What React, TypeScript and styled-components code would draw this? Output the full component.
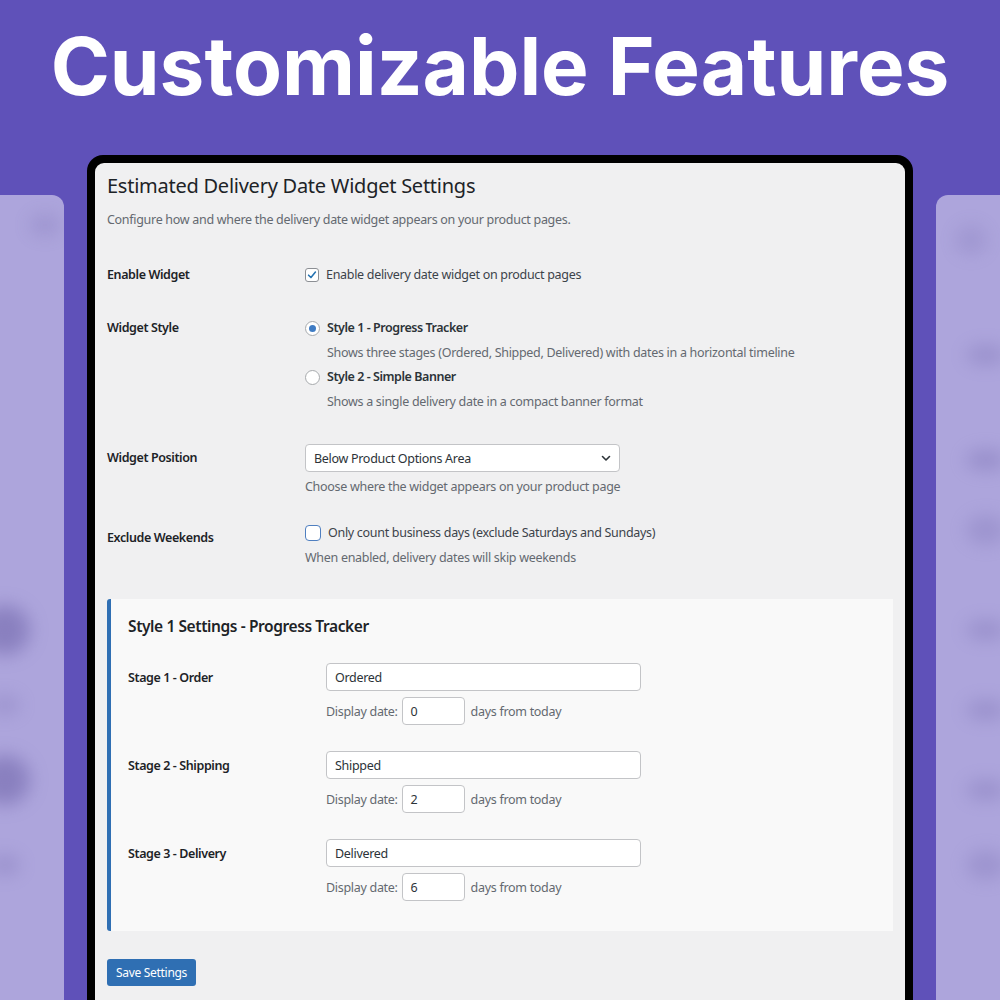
import React from 'react';
import styled, { createGlobalStyle } from 'styled-components';

const GlobalStyle = createGlobalStyle`
  html, body {
    margin: 0;
    padding: 0;
  }
  body {
    font-family: "Noto Sans", "Open Sans", sans-serif;
  }
`;

interface IBlob {
	top: number;
	left: number;
	w: number;
	h: number;
	o: number;
}

const leftBlobs: IBlob[] = [
	{top: 20, left: 30, w: 30, h: 20, o: 0.25},
	{top: 410, left: -20, w: 50, h: 50, o: 0.55},
	{top: 500, left: -10, w: 30, h: 20, o: 0.25},
	{top: 560, left: -20, w: 50, h: 50, o: 0.55},
	{top: 660, left: -10, w: 30, h: 20, o: 0.3},
];

const rightBlobs: IBlob[] = [
	{top: 30, left: 20, w: 30, h: 30, o: 0.2},
	{top: 150, left: 30, w: 40, h: 20, o: 0.3},
	{top: 255, left: 30, w: 40, h: 20, o: 0.35},
	{top: 320, left: 30, w: 40, h: 30, o: 0.25},
	{top: 425, left: 30, w: 40, h: 20, o: 0.3},
	{top: 505, left: 30, w: 40, h: 20, o: 0.3},
	{top: 585, left: 30, w: 40, h: 20, o: 0.3},
	{top: 655, left: 30, w: 40, h: 30, o: 0.25},
];

const stages = [
	{label: 'Stage 1 - Order', name: 'Ordered', days: '0'},
	{label: 'Stage 2 - Shipping', name: 'Shipped', days: '2'},
	{label: 'Stage 3 - Delivery', name: 'Delivered', days: '6'},
];

const CheckIcon = (): JSX.Element => (
	<svg width="14" height="14" viewBox="0 0 14 14">
		<path d="M3 7.2 L5.8 10 L11 3.6" fill="none" stroke="#2271b1" strokeWidth="1.8" strokeLinecap="round" strokeLinejoin="round"/>
	</svg>
);

const Chevron = (): JSX.Element => (
	<svg width="12" height="12" viewBox="0 0 12 12">
		<path d="M2.5 4.5 L6 8 L9.5 4.5" fill="none" stroke="#2c3338" strokeWidth="1.6" strokeLinecap="round" strokeLinejoin="round"/>
	</svg>
);

const App: React.FC = (): JSX.Element => {
	return (
		<Page>
			<GlobalStyle/>
			<Headline>Customizable Features</Headline>

			<Stage>
				<SidePanel>
					{leftBlobs.map((b, i) => (
						<Blob key={i} style={{top: b.top, left: b.left, width: b.w, height: b.h, opacity: b.o}}/>
					))}
				</SidePanel>

				<Frame>
					<Screen>
						<PageTitle>Estimated Delivery Date Widget Settings</PageTitle>
						<Intro>Configure how and where the delivery date widget appears on your product pages.</Intro>

						<Row gap={35}>
							<Label>Enable Widget</Label>
							<Field>
								<OptionLine>
									<Checkbox checked><CheckIcon/></Checkbox>
									<OptionText>Enable delivery date widget on product pages</OptionText>
								</OptionLine>
							</Field>
						</Row>

						<Row gap={33}>
							<Label>Widget Style</Label>
							<Field>
								<OptionLine>
									<Radio checked/>
									<OptionText strong>Style 1 - Progress Tracker</OptionText>
								</OptionLine>
								<OptionHint>Shows three stages (Ordered, Shipped, Delivered) with dates in a horizontal timeline</OptionHint>
								<OptionLine spaced>
									<Radio/>
									<OptionText strong>Style 2 - Simple Banner</OptionText>
								</OptionLine>
								<OptionHint>Shows a single delivery date in a compact banner format</OptionHint>
							</Field>
						</Row>

						<Row gap={32}>
							<Label offset={4}>Widget Position</Label>
							<Field>
								<Select>
									<span>Below Product Options Area</span>
									<Chevron/>
								</Select>
								<Description>Choose where the widget appears on your product page</Description>
							</Field>
						</Row>

						<Row gap={26}>
							<Label offset={5}>Exclude Weekends</Label>
							<Field>
								<OptionLine>
									<Checkbox focused/>
									<OptionText>Only count business days (exclude Saturdays and Sundays)</OptionText>
								</OptionLine>
								<Description>When enabled, delivery dates will skip weekends</Description>
							</Field>
						</Row>

						<SettingsBox>
							<BoxTitle>Style 1 Settings - Progress Tracker</BoxTitle>
							{stages.map((s, i) => (
								<Row key={s.label} gap={i === 0 ? 25 : 26}>
									<Label offset={5}>{s.label}</Label>
									<Field>
										<TextInput>{s.name}</TextInput>
										<DateLine>
											<span>Display date:</span>
											<NumberInput>{s.days}</NumberInput>
											<span>days from today</span>
										</DateLine>
									</Field>
								</Row>
							))}
						</SettingsBox>

						<SaveButton>Save Settings</SaveButton>
					</Screen>
				</Frame>

				<SidePanel>
					{rightBlobs.map((b, i) => (
						<Blob key={i} style={{top: b.top, left: b.left, width: b.w, height: b.h, opacity: b.o}}/>
					))}
				</SidePanel>
			</Stage>
		</Page>
	);
};

export default App;

const Page = styled.div`
  width: 1000px;
  height: 1000px;
  overflow: hidden;
  background-color: #5f51b9;
  display: flex;
  flex-direction: column;
`;

const Headline = styled.h1`
  flex-shrink: 0;
  margin: 0;
  height: 155px;
  padding-top: 18px;
  box-sizing: border-box;
  font-family: Inter, "Liberation Sans", sans-serif;
  font-weight: 700;
  font-size: 80px;
  line-height: 96px;
  color: #ffffff;
  text-align: center;
  letter-spacing: 0;
`;

const Stage = styled.div`
  flex-shrink: 0;
  display: flex;
  justify-content: space-between;
  align-items: flex-start;
`;

const SidePanel = styled.div`
  position: relative;
  overflow: hidden;
  width: 64px;
  height: 900px;
  margin-top: 40px;
  border-radius: 12px;
  background-color: #ada5dc;
  &:first-child {
    border-radius: 0 12px 12px 0;
  }
  &:last-child {
    border-radius: 12px 0 0 12px;
  }
`;

const Blob = styled.div`
  position: absolute;
  border-radius: 50%;
  background-color: #6d62a8;
  filter: blur(9px);
`;

const Frame = styled.div`
  width: 826px;
  height: 900px;
  box-sizing: border-box;
  background-color: #000000;
  border-radius: 16px;
  padding: 8px 8px 0 8px;
`;

const Screen = styled.div`
  height: 100%;
  box-sizing: border-box;
  background-color: #f0f0f1;
  border-radius: 9px 9px 0 0;
  padding: 9px 12px 0 12px;
  color: #1d2327;
  font-size: 12.5px;
  letter-spacing: -0.3px;
`;

const PageTitle = styled.h2`
  margin: 0;
  font-size: 20px;
  font-weight: 400;
  line-height: 28px;
  letter-spacing: -0.25px;
  color: #1d2327;
`;

const Intro = styled.p`
  margin: 10px 0 0 0;
  font-size: 12.5px;
  line-height: 20px;
  color: #646970;
`;

const Row = styled.div<{ gap: number }>`
  display: grid;
  grid-template-columns: 198px 1fr;
  align-items: start;
  margin-top: ${(props) => props.gap}px;
`;

const Label = styled.div<{ offset?: number }>`
  padding-top: ${(props) => props.offset || 0}px;
  font-size: 12.5px;
  font-weight: 600;
  line-height: 20px;
  letter-spacing: -0.4px;
  color: #1d2327;
`;

const Field = styled.div`
  display: flex;
  flex-direction: column;
  align-items: flex-start;
`;

const OptionLine = styled.div<{ spaced?: boolean }>`
  display: flex;
  align-items: center;
  gap: 7px;
  height: 20px;
  margin-top: ${(props) => props.spaced ? 4 : 0}px;
`;

const OptionText = styled.span<{ strong?: boolean }>`
  font-size: 12.5px;
  font-weight: ${(props) => props.strong ? 600 : 400};
  letter-spacing: ${(props) => props.strong ? -0.45 : -0.3}px;
  color: ${(props) => props.strong ? '#2c3338' : '#3c434a'};
  line-height: 20px;
`;

const OptionHint = styled.div`
  margin: 5px 0 0 22px;
  font-size: 12.5px;
  line-height: 20px;
  color: #646970;
`;

const Description = styled.div`
  margin-top: 5px;
  font-size: 12.5px;
  line-height: 20px;
  color: #646970;
`;

const Checkbox = styled.span<{ checked?: boolean, focused?: boolean }>`
  width: 14px;
  height: 14px;
  display: inline-flex;
  align-items: center;
  justify-content: center;
  box-sizing: border-box;
  border-radius: 3px;
  background-color: #ffffff;
  border: ${(props) => props.focused ? '1.5px solid #4f7fc0' : '1px solid #8c8f94'};
  ${(props) => props.focused ? 'width: 16px; height: 16px; border-radius: 4px;' : ''}
`;

const Radio = styled.span<{ checked?: boolean }>`
  width: 15px;
  height: 15px;
  box-sizing: border-box;
  border-radius: 50%;
  border: 1px solid #a7aaad;
  background-color: #ffffff;
  display: inline-flex;
  align-items: center;
  justify-content: center;
  &::after {
    content: '';
    width: 7px;
    height: 7px;
    border-radius: 50%;
    background-color: ${(props) => props.checked ? '#3f7cc4' : 'transparent'};
  }
`;

const Select = styled.div`
  width: 315px;
  height: 28px;
  box-sizing: border-box;
  display: flex;
  align-items: center;
  justify-content: space-between;
  padding: 0 7px 0 8px;
  background-color: #ffffff;
  border: 1px solid #c3c4c7;
  border-radius: 4px;
  font-size: 12.5px;
  color: #2c3338;
`;

const SettingsBox = styled.div`
  margin-top: 31px;
  background-color: #f9f9f9;
  border-left: 4px solid #2f6fb3;
  border-radius: 3px 0 0 3px;
  padding: 15px 17px 30px 17px;
`;

const BoxTitle = styled.h3`
  margin: 0;
  font-size: 15.5px;
  font-weight: 600;
  line-height: 24px;
  letter-spacing: -0.4px;
  color: #1d2327;
`;

const TextInput = styled.div`
  width: 315px;
  height: 28px;
  box-sizing: border-box;
  display: flex;
  align-items: center;
  padding: 0 8px;
  background-color: #ffffff;
  border: 1px solid #c3c4c7;
  border-radius: 4px;
  font-size: 12.5px;
  color: #2c3338;
`;

const DateLine = styled.div`
  margin-top: 6px;
  display: flex;
  align-items: center;
  gap: 4px;
  font-size: 12.5px;
  color: #646970;
  & > span:last-child {
    margin-left: 2px;
  }
`;

const NumberInput = styled(TextInput)`
  width: 63px;
`;

const SaveButton = styled.button`
  margin-top: 28px;
  height: 27px;
  padding: 0 9px;
  border: none;
  border-radius: 3px;
  background-color: #2f6fb3;
  color: #ffffff;
  font-family: inherit;
  font-size: 12px;
  letter-spacing: -0.3px;
`;
